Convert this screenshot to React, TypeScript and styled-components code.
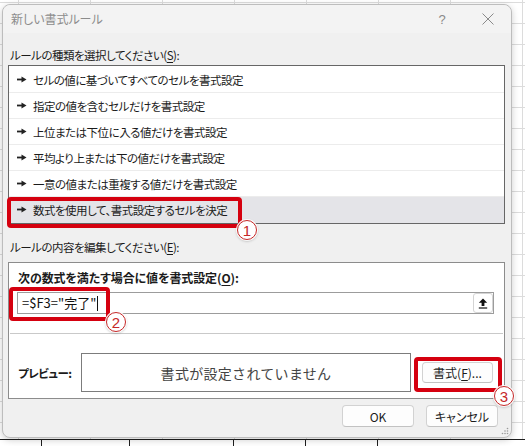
import React from "react";
import styled, { createGlobalStyle } from "styled-components";

const Global = createGlobalStyle`
  html, body { margin: 0; padding: 0; background: #ffffff; }
  body { font-family: "Noto Sans CJK JP", "Noto Sans", sans-serif; }
  * { box-sizing: border-box; }
`;

const Sheet = styled.div`
  width: 525px;
  height: 446px;
  overflow: hidden;
  padding: 4px 0 0 2px;
  background-color: #ffffff;
  background-image:
    linear-gradient(#dcdcdc 1px, transparent 1px),
    linear-gradient(90deg, #dcdcdc 1px, transparent 1px);
  background-size: 100% 21px, 72px 100%;
  background-position: 0 2px, 18px 0;
`;

const SheetEdge = styled.div`
  width: 525px;
  height: 8px;
  margin-left: -2px;
  margin-top: 1px;
  border-top: 1px solid #1e1e1e;
  background-color: #ffffff;
  background-repeat: no-repeat;
  background-image:
    linear-gradient(#1e1e1e, #1e1e1e),
    linear-gradient(#1e1e1e, #1e1e1e),
    linear-gradient(#1e1e1e, #1e1e1e),
    linear-gradient(#1e1e1e, #1e1e1e),
    linear-gradient(#1e1e1e, #1e1e1e);
  background-size: 1px 100%, 1px 100%, 1px 100%, 1px 100%, 1px 100%;
  background-position: 41px 0, 129px 0, 233px 0, 305px 0, 377px 0;
`;

const Dialog = styled.div`
  position: relative;
  width: 510px;
  height: 434px;
  background: #f0f0f0;
  border: 1px solid #bdbdbd;
  border-radius: 8px;
  box-shadow: 0 2px 7px rgba(0, 0, 0, 0.2);
  display: flex;
  flex-direction: column;
  font-size: 12px;
  color: #1b1b1b;
  font-feature-settings: "palt";
`;

const TitleBar = styled.div`
  height: 28px;
  display: flex;
  align-items: center;
  padding-left: 8px;
  background: #f3f3f3;
  border-radius: 8px 8px 0 0;
`;

const TitleText = styled.div`
  flex: 1;
  color: #8c8c8c;
  font-size: 12px;
  line-height: 16px;
`;

const TitleButton = styled.div`
  width: 46px;
  height: 28px;
  display: flex;
  align-items: center;
  justify-content: center;
  color: #8a8a8a;
  font-size: 13px;
  font-family: "Liberation Sans", sans-serif;
`;

const Body = styled.div`
  flex: 1;
  display: flex;
  flex-direction: column;
  padding: 0 6px 0 5px;
`;

const SectionLabel = styled.div<{ $top: number; $bottom: number }>`
  margin: ${(p) => p.$top}px 0 ${(p) => p.$bottom}px 2px;
  line-height: 16px;
  font-size: 11.5px;
  letter-spacing: -0.5px;
`;

const Key = styled.span`
  text-decoration: underline;
  text-underline-offset: 2px;
`;

const RuleList = styled.div`
  background: #ffffff;
  border: 1px solid #666666;
  padding-top: 1px;
  display: flex;
  flex-direction: column;
`;

const RuleRow = styled.div<{ $selected?: boolean }>`
  height: 26px;
  display: flex;
  align-items: center;
  padding-left: 8px;
  gap: 6px;
  background: ${(p) => (p.$selected ? "#e4e4e8" : "transparent")};
  border-bottom: 1px solid ${(p) => (p.$selected ? "#e4e4e8" : "#ececec")};
  font-size: 11.5px;
  letter-spacing: -0.5px;
  color: #1b1b1b;
`;

const GroupBox = styled.div`
  background: #ffffff;
  border: 1px solid #8c8c8c;
  padding: 7px 10px 6px 8px;
  display: flex;
  flex-direction: column;
`;

const GroupLabel = styled.div`
  margin-left: 1px;
  line-height: 16px;
  font-size: 12px;
  letter-spacing: -0.1px;
  font-weight: 700;
`;

const FormulaBox = styled.div`
  margin-top: 6px;
  height: 22px;
  border: 1px solid #9c9c9c;
  display: flex;
  align-items: center;
  padding-left: 4px;
`;

const FormulaText = styled.div`
  flex: 1;
  display: flex;
  align-items: center;
  font-size: 13px;
  line-height: 18px;
  color: #111;
  font-feature-settings: normal;
`;

const Caret = styled.span`
  display: inline-block;
  width: 1px;
  height: 15px;
  background: #111;
  margin-left: 1px;
`;

const CollapseButton = styled.div`
  width: 20px;
  height: 20px;
  border: 1px solid #d4d4d4;
  border-radius: 3px;
  background: #ffffff;
  display: flex;
  align-items: center;
  justify-content: center;
`;

const Divider = styled.div`
  margin: 19px -9px 0 -7px;
  height: 1px;
  background: #c9c9c9;
`;

const PreviewRow = styled.div`
  margin-top: 19px;
  display: flex;
  align-items: center;
`;

const PreviewLabel = styled.div`
  width: 64px;
  padding-left: 1px;
  font-weight: 700;
  font-size: 11.5px;
  letter-spacing: -0.5px;
`;

const PreviewBox = styled.div`
  width: 330px;
  height: 39px;
  border: 1px solid #7c7c7c;
  display: flex;
  align-items: center;
  justify-content: center;
  font-size: 14px;
  letter-spacing: 0.3px;
  color: #444444;
  font-feature-settings: normal;
`;

const PushButton = styled.div<{ $width: number }>`
  width: ${(p) => p.$width}px;
  height: 22px;
  border: 1px solid #d2d2d2;
  border-bottom-color: #c2c2c2;
  border-radius: 4px;
  background: #fdfdfd;
  display: flex;
  align-items: center;
  justify-content: center;
  font-size: 12px;
  color: #1b1b1b;
`;

const FormatButton = styled(PushButton)`
  margin-left: 11px;
  height: 21px;
`;

const Footer = styled.div`
  margin-top: 6px;
  display: flex;
  justify-content: flex-end;
  gap: 12px;
  padding-right: 7px;
`;

const Highlight = styled.div<{ $x: number; $y: number; $w: number; $h: number }>`
  position: absolute;
  left: ${(p) => p.$x}px;
  top: ${(p) => p.$y}px;
  width: ${(p) => p.$w}px;
  height: ${(p) => p.$h}px;
  border: 4px solid #d5000f;
  border-radius: 4px;
  pointer-events: none;
`;

const Badge = styled.div<{ $x: number; $y: number }>`
  position: absolute;
  left: ${(p) => p.$x - 10}px;
  top: ${(p) => p.$y - 10}px;
  width: 20px;
  height: 20px;
  border-radius: 50%;
  background: #ffffff;
  border: 1px solid #c62828;
  box-shadow: 0 0 0 1px rgba(255, 255, 255, 0.9), 0 1px 3px rgba(0, 0, 0, 0.35);
  display: flex;
  align-items: center;
  justify-content: center;
  color: #c62828;
  font-family: "Liberation Sans", sans-serif;
  font-size: 15px;
  line-height: 1;
`;

const Grip = styled.div`
  position: absolute;
  right: 2px;
  bottom: 2px;
  width: 8px;
  height: 8px;
  display: flex;
`;

const RowArrow = () => (
  <svg width="10" height="7" viewBox="0 0 10 7">
    <rect x="0" y="2.6" width="5" height="1.8" fill="#222" />
    <polygon points="4.5,0.5 9.5,3.5 4.5,6.5" fill="#222" />
  </svg>
);

const CloseIcon = () => (
  <svg width="12" height="12" viewBox="0 0 12 12">
    <path d="M0.5 0.5 L11.5 11.5 M11.5 0.5 L0.5 11.5" stroke="#8a8a8a" strokeWidth="1" fill="none" />
  </svg>
);

const UpIcon = () => (
  <svg width="10" height="11" viewBox="0 0 10 11">
    <polygon points="5,0.5 9.2,4.8 6.4,4.8 6.4,8 3.6,8 3.6,4.8 0.8,4.8" fill="#111" />
    <rect x="0.8" y="9.4" width="8.4" height="1.2" fill="#111" />
  </svg>
);

const GripIcon = () => (
  <svg width="8" height="8" viewBox="0 0 8 8">
    {[
      [6.5, 1.5],
      [6.5, 4],
      [4, 4],
      [6.5, 6.5],
      [4, 6.5],
      [1.5, 6.5],
    ].map(([cx, cy], i) => (
      <circle key={i} cx={cx} cy={cy} r="0.8" fill="#9a9a9a" />
    ))}
  </svg>
);

const rules = [
  "セルの値に基づいてすべてのセルを書式設定",
  "指定の値を含むセルだけを書式設定",
  "上位または下位に入る値だけを書式設定",
  "平均より上または下の値だけを書式設定",
  "一意の値または重複する値だけを書式設定",
  "数式を使用して、書式設定するセルを決定",
];

export default function App() {
  return (
    <>
      <Global />
      <Sheet>
        <Dialog>
          <TitleBar>
            <TitleText>新しい書式ルール</TitleText>
            <TitleButton>?</TitleButton>
            <TitleButton>
              <CloseIcon />
            </TitleButton>
          </TitleBar>
          <Body>
            <SectionLabel $top={14} $bottom={2}>
              ルールの種類を選択してください(<Key>S</Key>):
            </SectionLabel>
            <RuleList>
              {rules.map((r, i) => (
                <RuleRow key={r} $selected={i === rules.length - 1}>
                  <RowArrow />
                  <span>{r}</span>
                </RuleRow>
              ))}
            </RuleList>
            <SectionLabel $top={15} $bottom={7}>
              ルールの内容を編集してください(<Key>E</Key>):
            </SectionLabel>
            <GroupBox>
              <GroupLabel>
                次の数式を満たす場合に値を書式設定(<Key>O</Key>):
              </GroupLabel>
              <FormulaBox>
                <FormulaText>
                  =$F3="完了"
                  <Caret />
                </FormulaText>
                <CollapseButton>
                  <UpIcon />
                </CollapseButton>
              </FormulaBox>
              <Divider />
              <PreviewRow>
                <PreviewLabel>プレビュー:</PreviewLabel>
                <PreviewBox>書式が設定されていません</PreviewBox>
                <FormatButton $width={71}>
                  書式(<Key>F</Key>)...
                </FormatButton>
              </PreviewRow>
            </GroupBox>
            <Footer>
              <PushButton $width={72}>OK</PushButton>
              <PushButton $width={72}>キャンセル</PushButton>
            </Footer>
          </Body>
          <Highlight $x={4} $y={192} $w={235} $h={31} />
          <Badge $x={244} $y={225}>1</Badge>
          <Highlight $x={6} $y={282} $w={101} $h={34} />
          <Badge $x={113} $y={317}>2</Badge>
          <Highlight $x={411} $y={352} $w={88} $h={35} />
          <Badge $x={501} $y={391}>3</Badge>
          <Grip>
            <GripIcon />
          </Grip>
        </Dialog>
        <SheetEdge />
      </Sheet>
    </>
  );
}
